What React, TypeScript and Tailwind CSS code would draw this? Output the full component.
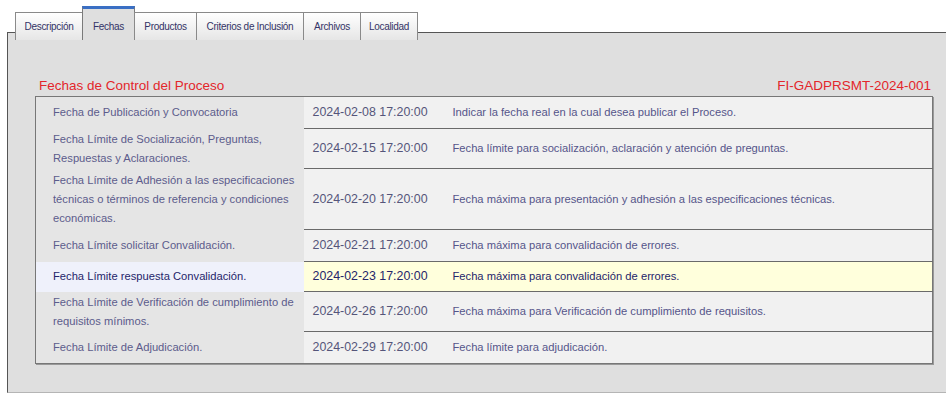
const tabs = [
  { label: "Descripción", w: "w-[68px]" },
  { label: "Fechas", w: "w-[53px]", active: true },
  { label: "Productos", w: "w-[63px]" },
  { label: "Criterios de Inclusión", w: "w-[108px]" },
  { label: "Archivos", w: "w-[58px]" },
  { label: "Localidad", w: "w-[58px]" },
];

const rows = [
  {
    name: ["Fecha de Publicación y Convocatoria"],
    date: "2024-02-08 17:20:00",
    desc: "Indicar la fecha real en la cual desea publicar el Proceso.",
    h: "h-[32px]",
  },
  {
    name: ["Fecha Límite de Socialización, Preguntas,", "Respuestas y Aclaraciones."],
    date: "2024-02-15 17:20:00",
    desc: "Fecha límite para socialización, aclaración y atención de preguntas.",
    h: "h-[40px]",
  },
  {
    name: [
      "Fecha Límite de Adhesión a las especificaciones",
      "técnicas o términos de referencia y condiciones",
      "económicas.",
    ],
    date: "2024-02-20 17:20:00",
    desc: "Fecha máxima para presentación y adhesión a las especificaciones técnicas.",
    h: "h-[61px]",
  },
  {
    name: ["Fecha Límite solicitar Convalidación."],
    date: "2024-02-21 17:20:00",
    desc: "Fecha máxima para convalidación de errores.",
    h: "h-[32px]",
  },
  {
    name: ["Fecha Límite respuesta Convalidación."],
    date: "2024-02-23 17:20:00",
    desc: "Fecha máxima para convalidación de errores.",
    h: "h-[30px]",
    active: true,
  },
  {
    name: ["Fecha Límite de Verificación de cumplimiento de", "requisitos mínimos."],
    date: "2024-02-26 17:20:00",
    desc: "Fecha máxima para Verificación de cumplimiento de requisitos.",
    h: "h-[40px]",
  },
  {
    name: ["Fecha Límite de Adjudicación."],
    date: "2024-02-29 17:20:00",
    desc: "Fecha límite para adjudicación.",
    h: "h-[32px]",
  },
];

export default function App() {
  return (
    <div className="w-[948px] h-[395px] bg-white pt-[6px] font-['Liberation_Sans',Arial,sans-serif] overflow-hidden">
      {/* tab strip, overlaps the panel's top border */}
      <div className="relative z-10 flex items-end pl-[16px] -mb-[8px] h-[34px] text-[10px] tracking-[-0.3px] text-[#333366] whitespace-nowrap">
        {tabs.map((t) =>
          t.active ? (
            <div
              key={t.label}
              className={`${t.w} h-[34px] flex items-center justify-center pt-[4px] bg-[#dfdfdf] border-t-[3px] border-t-[#3a6fc4] border-x border-x-[#7a7a7a] -ml-px`}
            >
              {t.label}
            </div>
          ) : (
            <div
              key={t.label}
              className={`${t.w} h-[28px] flex items-center justify-center bg-gradient-to-b from-white to-[#e6e6e6] border-t border-x border-[#8a8a8a] -ml-px`}
            >
              {t.label}
            </div>
          )
        )}
      </div>

      <div className="ml-[7px] mr-[2px] h-[361px] bg-[#dfdfdf] border-l border-t border-[#555] border-b border-b-[#b5b5b5] pt-[43px] pl-[27px] pr-[11px]">
        <div className="flex justify-between items-center h-[20px] px-[4px] text-[13.5px] text-[#e3262b]">
          <span>Fechas de Control del Proceso</span>
          <span>FI-GADPRSMT-2024-001</span>
        </div>

        <table className="w-[898px] table-fixed border border-[#777] border-collapse text-[11.2px] leading-[19px] shadow-[1px_1px_0_#999]">
          <colgroup>
            <col className="w-[268px]" />
            <col className="w-[140px]" />
            <col />
          </colgroup>
          <tbody>
            {rows.map((r, i) => (
              <tr key={i} className={r.h}>
                <td
                  className={`pl-[17px] align-middle overflow-hidden ${
                    r.active ? "bg-[#eff1fb] text-[#25256a]" : "bg-[#e5e5e5] text-[#5c5c8c]"
                  }`}
                >
                  {r.name.map((l, j) => (
                    <div key={j} className="whitespace-nowrap">
                      {l}
                    </div>
                  ))}
                </td>
                <td
                  className={`pl-[9px] align-middle whitespace-nowrap text-[12.4px] ${
                    i > 0 ? "border-t border-t-[#6a6a6a]" : ""
                  } ${r.active ? "bg-[#ffffdc] text-[#25256a]" : "bg-[#f1f1f1] text-[#55557a]"}`}
                >
                  {r.date}
                </td>
                <td
                  className={`pl-[9px] align-middle whitespace-nowrap ${
                    i > 0 ? "border-t border-t-[#6a6a6a]" : ""
                  } ${r.active ? "bg-[#ffffdc] text-[#25256a]" : "bg-[#f1f1f1] text-[#55558a]"}`}
                >
                  {r.desc}
                </td>
              </tr>
            ))}
          </tbody>
        </table>
      </div>
    </div>
  );
}
